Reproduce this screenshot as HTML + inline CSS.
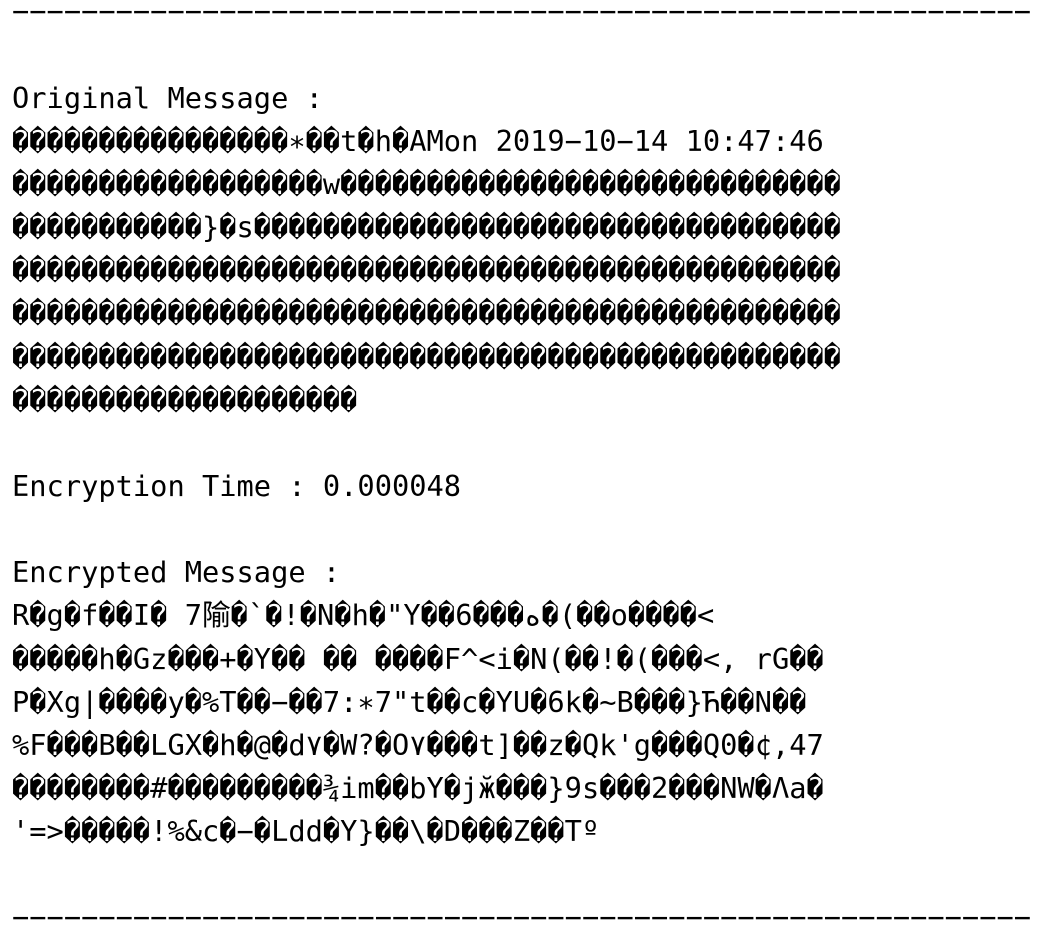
<!DOCTYPE html>
<html><head><meta charset="utf-8"><style>
html,body{margin:0;padding:0;background:#fff;width:1052px;height:938px;overflow:hidden}
pre{margin:-9.6px 0 0 12px;font-family:"DejaVu Sans Mono","Liberation Mono","Noto Sans CJK SC",monospace;font-size:28.7px;line-height:43.14px;color:#000;white-space:pre}
</style></head><body><pre>−−−−−−−−−−−−−−−−−−−−−−−−−−−−−−−−−−−−−−−−−−−−−−−−−−−−−−−−−−−

Original Message :
����������������∗��t�h�AMon 2019−10−14 10:47:46
������������������w�����������������������������
�����������}�s����������������������������������
������������������������������������������������
������������������������������������������������
������������������������������������������������
��������������������

Encryption Time : 0.000048

Encrypted Message :
R�g�f��I� 7隃�`�!�N�h�"Y��6���ه�(��o����&lt;
�����h�Gz���+�Y�� �� ����F^&lt;i�N(��!�(���&lt;, rG��
P�Xg|����y�%T��−��7:∗7"t��c�YU�6k�~B���}Ћ��N��
%F���B��LGX�h�@�d۷�W?�O۷���t]��z�Qk'g���Q0�¢,47
��������#���������¾im��bY�jӂ���}9s���2���NW�Λa�
'=&gt;�����!%&amp;c�−�Ldd�Y}��\�D���Z��Tº

−−−−−−−−−−−−−−−−−−−−−−−−−−−−−−−−−−−−−−−−−−−−−−−−−−−−−−−−−−−</pre></body></html>
